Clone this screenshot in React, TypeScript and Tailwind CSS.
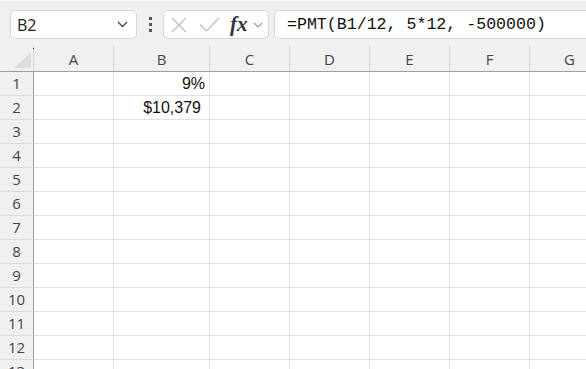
import React from "react";

const cols = [
  { id: "A", w: "w-[80px]" },
  { id: "B", w: "w-[96px]" },
  { id: "C", w: "w-[80px]" },
  { id: "D", w: "w-[80px]" },
  { id: "E", w: "w-[80px]" },
  { id: "F", w: "w-[80px]" },
  { id: "G", w: "w-[80px]" },
];

const rows = Array.from({ length: 13 }, (_, i) => i + 1);

const ui = { fontFamily: '"Open Sans", "Noto Sans", sans-serif' };
const cellFont = { fontFamily: '"Liberation Sans", Arial, sans-serif' };

function cellValue(row: number, col: string) {
  if (col !== "B") return null;
  if (row === 1) return <span className="pr-[4px]">9%</span>;
  if (row === 2) return <span className="pr-[8px]">$10,379</span>;
  return null;
}

export default function App() {
  return (
    <div className="w-[586px] h-[369px] overflow-hidden bg-[#f0f0f0] select-none">
      {/* TOP EDGE */}
      <div className="h-[3px] bg-gradient-to-b from-[#fafafa] to-[#e9e9e9]" />

      {/* FORMULA BAR */}
      <div className="flex items-start h-[43px] pt-[7px] pl-[10px]">
        <div
          className="shrink-0 flex items-center justify-between w-[127px] h-[29px] bg-white border border-[#d6d6d6] rounded-[5px] pl-[6px] pr-[8px] text-[16px] text-[#222]"
          style={ui}
        >
          <span>B2</span>
          <svg width="11" height="7" viewBox="0 0 11 7" fill="none">
            <path d="M1 1l4.5 4.5L10 1" stroke="#444" strokeWidth="1.3" />
          </svg>
        </div>

        <div className="shrink-0 w-[26px] h-[29px] flex flex-col items-center justify-center gap-[3px]">
          <span className="w-[3px] h-[3px] bg-[#555]" />
          <span className="w-[3px] h-[3px] bg-[#555]" />
          <span className="w-[3px] h-[3px] bg-[#555]" />
        </div>

        <div className="shrink-0 flex items-center w-[106px] h-[29px] bg-white border border-[#d6d6d6] rounded-[5px]">
          <svg className="ml-[7px]" width="16" height="16" viewBox="0 0 16 16" fill="none">
            <path d="M1 1l14 14M15 1L1 15" stroke="#bdbdbd" strokeWidth="1.2" />
          </svg>
          <svg className="ml-[12px]" width="21" height="15" viewBox="0 0 21 15" fill="none">
            <path d="M1 7.5l6.5 6.5L20 1" stroke="#bdbdbd" strokeWidth="1.2" />
          </svg>
          <span
            className="ml-[10px] text-[21px] italic font-semibold leading-none text-[#333]"
            style={{ fontFamily: '"Liberation Serif", "DejaVu Serif", serif' }}
          >
            fx
          </span>
          <svg className="ml-[5px]" width="10" height="6" viewBox="0 0 10 6" fill="none">
            <path d="M1 1l4 4 4-4" stroke="#999" strokeWidth="1.1" />
          </svg>
        </div>

        <div
          className="shrink-0 ml-[5px] flex items-center w-[330px] h-[29px] bg-white border border-[#d6d6d6] rounded-[5px] pl-[12px] pt-[1px] text-[16.6px] text-[#111]"
          style={{ fontFamily: '"Liberation Mono", "DejaVu Sans Mono", monospace' }}
        >
          =PMT(B1/12, 5*12, -500000)
        </div>
      </div>

      {/* COLUMN HEADERS */}
      <div className="flex h-[26px] border-b border-[#9f9f9f] text-[15px] text-[#444]" style={ui}>
        <div className="relative w-[34px] shrink-0 border-r border-[#d6d6d6]">
          <svg className="absolute left-[14px] top-[6px]" width="17" height="16" viewBox="0 0 17 16">
            <polygon points="0,16 17,0 17,16" fill="#dcdcdc" />
          </svg>
          <span className="absolute right-[-1px] top-[2px] w-[1px] h-[1px] bg-[#222]" />
        </div>
        {cols.map((c) => (
          <div
            key={c.id}
            className={`${c.w} shrink-0 flex items-center justify-center border-r border-[#d6d6d6] pt-[2px]`}
          >
            {c.id}
          </div>
        ))}
      </div>

      {/* GRID */}
      {rows.map((r) => (
        <div key={r} className="flex h-[24px]">
          <div
            className="w-[34px] shrink-0 flex items-center justify-center border-r border-b border-r-[#9f9f9f] border-b-[#dadada] text-[15px] text-[#444]"
            style={ui}
          >
            {r}
          </div>
          {cols.map((c) => (
            <div
              key={c.id}
              className={`${c.w} shrink-0 bg-white border-r border-b border-[#e1e1e1] flex items-center justify-end text-[16px] text-[#111]`}
              style={cellFont}
            >
              {cellValue(r, c.id)}
            </div>
          ))}
        </div>
      ))}
    </div>
  );
}
